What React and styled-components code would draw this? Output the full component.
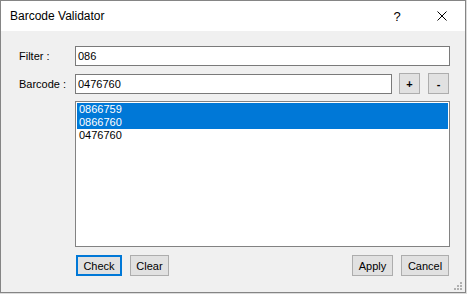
import styled, { createGlobalStyle } from "styled-components";

const GlobalStyle = createGlobalStyle`
    html, body {
        margin: 0;
        padding: 0;
        background: #dcdcdc;
    }
    body {
        font-family: "Liberation Sans", Arial, sans-serif;
        font-size: 11px;
        color: #000;
    }
`;

const Window = styled.div`
    width: 464px;
    height: 291px;
    border: 1px solid #858585;
    background: #f0f0f0;
    display: flex;
    flex-direction: column;
`,
TitleBar = styled.div`
    height: 30px;
    background: #fff;
    display: flex;
    align-items: center;
`,
Title = styled.span`
    flex: 1;
    padding-left: 9px;
    font-size: 12px;
    padding-bottom: 1px;
`,
CaptionButton = styled.div`
    width: 46px;
    height: 30px;
    display: flex;
    align-items: center;
    justify-content: center;
    font-size: 13px;
    padding-left: ${(p) => (p.$help ? "2px" : "0")};
    box-sizing: border-box;
`,
Body = styled.div`
    position: relative;
    flex: 1;
    padding: 15px 15px 16px 18px;
    display: flex;
    flex-direction: column;
`,
Row = styled.div`
    display: flex;
    align-items: center;
    height: ${(p) => p.$h}px;
    margin-bottom: ${(p) => p.$gap}px;
`,
Label = styled.label`
    width: 56px;
    flex-shrink: 0;
`,
TextBox = styled.div`
    box-sizing: border-box;
    height: 20px;
    flex: ${(p) => (p.$w ? "none" : "1")};
    width: ${(p) => (p.$w ? `${p.$w}px` : "auto")};
    border: 1px solid #7a7a7a;
    background: #fff;
    padding-left: 2px;
    display: flex;
    align-items: center;
`,
SmallButton = styled.button`
    box-sizing: border-box;
    width: 21px;
    height: 21px;
    margin-left: ${(p) => p.$ml}px;
    border: 1px solid #adadad;
    background: #e1e1e1;
    font-family: inherit;
    font-size: 11px;
    font-weight: bold;
    padding: 0;
    color: #000;
`,
ListBox = styled.div`
    box-sizing: border-box;
    margin-left: 56px;
    height: 146px;
    border: 1px solid #828282;
    background: #fff;
    padding: 1px;
    margin-bottom: 8px;
`,
ListItem = styled.div`
    height: 13px;
    line-height: 13px;
    padding-left: 2px;
    background: ${(p) => (p.$selected ? "#0078d7" : "transparent")};
    color: ${(p) => (p.$selected ? "#fff" : "#000")};
`,
ButtonBar = styled.div`
    display: flex;
    align-items: center;
    gap: 8px;
    height: 21px;
    margin-left: 57px;
    margin-right: 1px;
`,
Spacer = styled.div`
    flex: 1;
`,
Button = styled.button`
    box-sizing: border-box;
    width: ${(p) => p.$w}px;
    height: 21px;
    border: ${(p) => (p.$default ? "2px solid #0078d7" : "1px solid #adadad")};
    background: #e1e1e1;
    font-family: inherit;
    font-size: 11px;
    color: #000;
    padding: 0;
`,
SizeGrip = styled.svg`
    position: absolute;
    right: 2px;
    bottom: 1px;
`;

const items = [
    { code: "0866759", selected: true },
    { code: "0866760", selected: true },
    { code: "0476760", selected: false },
];

const App = () => {
    return (
        <>
            <GlobalStyle />
            <Window>
                <TitleBar>
                    <Title>Barcode Validator</Title>
                    <CaptionButton $help>?</CaptionButton>
                    <CaptionButton>
                        <svg width="10" height="10" viewBox="0 0 10 10">
                            <path d="M0.5 0.5L9.5 9.5M9.5 0.5L0.5 9.5" stroke="#000" strokeWidth="1" />
                        </svg>
                    </CaptionButton>
                </TitleBar>
                <Body>
                    <Row $h={20} $gap={7}>
                        <Label>Filter :</Label>
                        <TextBox>086</TextBox>
                    </Row>
                    <Row $h={21} $gap={7}>
                        <Label>Barcode :</Label>
                        <TextBox $w={317}>0476760</TextBox>
                        <SmallButton $ml={7}>+</SmallButton>
                        <SmallButton $ml={8}>-</SmallButton>
                    </Row>
                    <ListBox>
                        {items.map((it) => (
                            <ListItem key={it.code} $selected={it.selected}>{it.code}</ListItem>
                        ))}
                    </ListBox>
                    <ButtonBar>
                        <Button $w={46} $default>Check</Button>
                        <Button $w={39}>Clear</Button>
                        <Spacer />
                        <Button $w={41}>Apply</Button>
                        <Button $w={48}>Cancel</Button>
                    </ButtonBar>
                    <SizeGrip width="9" height="9" viewBox="0 0 9 9">
                        <g fill="#b0b0b0">
                            <rect x="6" y="0" width="2" height="2" />
                            <rect x="3" y="3" width="2" height="2" />
                            <rect x="6" y="3" width="2" height="2" />
                            <rect x="0" y="6" width="2" height="2" />
                            <rect x="3" y="6" width="2" height="2" />
                            <rect x="6" y="6" width="2" height="2" />
                        </g>
                    </SizeGrip>
                </Body>
            </Window>
        </>
    );
};

export default App;
